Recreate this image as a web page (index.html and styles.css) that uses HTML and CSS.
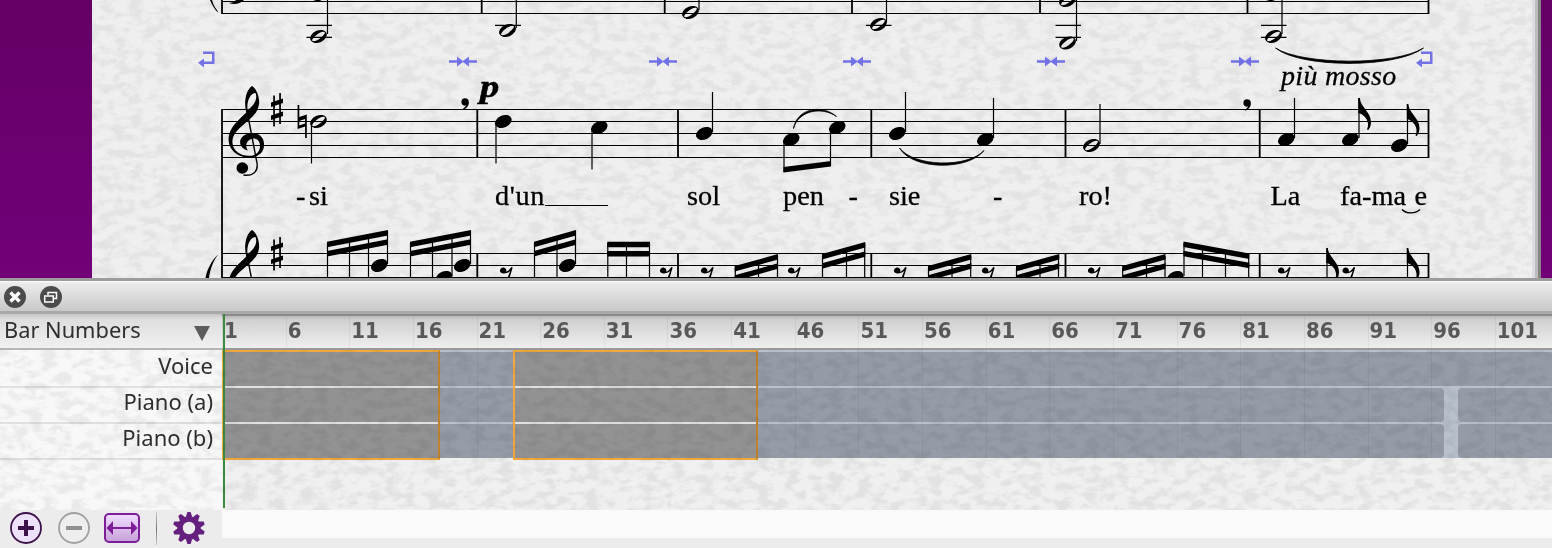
FILE: index.html
```
<!DOCTYPE html>
<html lang="en">
<head>
    <meta charset="UTF-8">
    <meta name="viewport" content="width=device-width, initial-scale=1.0">
    <title>Score</title>
    <link rel="stylesheet" href="styles.css">
</head>
<body>
    <div class="score">
        <svg class="music" width="1552" height="278" viewBox="0 0 1552 278">
            <defs>
                <filter id="grain" x="0" y="0" width="100%" height="100%" color-interpolation-filters="sRGB">
                    <feTurbulence type="fractalNoise" baseFrequency="0.07 0.12" numOctaves="4" seed="4"/>
                    <feColorMatrix values="0 0 0 0 0.89  0 0 0 0 0.89  0 0 0 0 0.89  4 0 0 0 -1.7"/>
                </filter>
                <g id="head"><ellipse rx="8.700" ry="6" transform="rotate(-24)"/></g>
                <g id="half"><path fill-rule="evenodd" transform="rotate(-24)" d="M-8.800 0A8.800 6 0 1 1 8.800 0A8.800 6 0 1 1-8.800 0M-7.500 1.400C-5.500 4.800 7.500 1.400 7.500-1.400C5.500-4.800-7.500-1.400-7.500 1.400"/></g>
                <g id="sharp"><path d="M273.200 95.500h1.700v31h-1.700zM279.200 93h1.700v31h-1.700zM271 102.500l12-4v4.500l-12 4zM271 115.500l12-4v4.500l-12 4z"/></g>
                <path id="rest" d="M-6 1.500A3.200 3.200 0 1 1 .2 2.200C2 2.200 4-.5 5.300-2.500L6.700-2 1.500 15H-1L4.200 1.500C1 4.500-6 5-6 1.500"/>
                <path id="flag" d="M-.7 0H.8C1.500 9 12 14 12 24C12 27 11 30 9.300 32L8 31.500C11.500 24 6 16.500-.7 15z"/>
                <path id="comma" d="M-3.600-1A3.600 3.600 0 0 1 3.800-1C4.200 3 1 6-2 6.700L-2.300 5.900C0 4.500 1 3 .8 2.300C-1.500 3.500-3.600 1.500-3.600-1"/>
                <path id="lock" d="M0-1.300H8V-5L14-.6 20-5V-1.300H28V1.300H20V5L14 .6 8 5V1.300H0z"/>
                <path id="return" d="M5 0H16.500V12.500H6V16L0 11.300 6 7V10H14V2.500H5z"/>
            </defs>
            <rect width="1552" height="278" filter="url(#grain)"/>

            <!-- system above -->
            <path class="line" d="M222 1.500H1428.500M222 13.500H1428.500"/>
            <path class="bar" d="M222 0V14M481.700 0V14M664.700 0V14M852 0V14M1040 0V14M1247.500 0V14M1428.500 0V14"/>
            <path class="line" d="M306.500 25.300H332M306.500 37.300H332M495 25.300H521M866 25.300H891.500M1055.500 25.300H1081M1055.500 37.300H1081M1261 25.300H1286.500M1261 37.300H1286.500"/>
            <path class="stem" d="M327.500 0V34M516.300 0V28M699 0V10M886.500 0V22M1076.500 0V41M1282 0V34"/>
            <use href="#half" x="318.500" y="36.500"/>
            <use href="#half" x="507.500" y="30.500"/>
            <use href="#half" x="690.500" y="12.500"/>
            <use href="#half" x="878.500" y="24.500"/>
            <use href="#half" x="1067.500" y="43"/>
            <use href="#half" x="1067.500" y=".5"/>
            <use href="#half" x="1273.500" y="36.500"/>
            <path d="M210 0C212 5 215 10 218.500 13L217 10C214 7 213 3 212 0zM229 3C234 5 240 4 244 0H236L234 2zM313 0H322L318 1.500zM1266 0H1275L1271 1.500z"/>
            <path class="slur" d="M1275.500 48C1300 68 1395 69 1423.500 48C1395 66 1302 65 1275.500 48z"/>

            <!-- layout marks -->
            <g class="marks">
                <use href="#return" x="198" y="51.500"/>
                <use href="#lock" x="449" y="61.500"/>
                <use href="#lock" x="649" y="61.500"/>
                <use href="#lock" x="843" y="61.500"/>
                <use href="#lock" x="1037" y="61.500"/>
                <use href="#lock" x="1231" y="61.500"/>
                <use href="#return" x="1416" y="51.500"/>
            </g>

            <!-- voice -->
            <path class="line" d="M222 109.500H1428.500M222 121.500H1428.500M222 133.500H1428.500M222 145.500H1428.500M222 157.500H1428.500"/>
            <path class="bar" d="M222 109V278M477.300 109V158M678 109V158M871.300 109V158M1065.500 109V158M1259.700 109V158M1428.500 109V158"/>
            <g id="treble">
                <path fill-rule="evenodd" d="M252 86C256 88 260 97 259 104C258 114 249 120 242 126C235 132 232 137 232.500 143C233 151 241 156.300 250 155.800C258 155 260 150 260 146C260 141 257 138.500 253.500 138.500C247.500 139 244 145 248 150.500C237 148 237 135 251 133C259 132 264.500 138 264 145C264 154 256 158 248 157.500C236 157 228.500 149 228.500 139C229 127 239 120 246.300 112.500C243.500 102 246 90 252 86zM247.500 110C254 106 258 99 255.500 93C250 93 246.500 102 247.500 110z"/>
                <path class="arc" d="M247 111L257 163C258.500 172 252 176.500 243.500 175"/>
                <circle cx="242.300" cy="168" r="5.800"/>
            </g>
            <use href="#sharp"/>
            <path d="M297.600 105h1.700v12l7.500-2.500v23.500h-1.700v-11.500l-7.500 2.500zM299.300 121v4.500l5.800-2v-4.500z" fill-rule="evenodd"/>
            <path class="stem" d="M311.500 123V163.500M496 123V163.500M592 129V169.500M712.500 132V92M784 141V172M830.500 129V166M905.500 132V92M993.500 138V98M1100 144V104M1294.500 138V98M1359 138V98M1407.500 144V104"/>
            <use href="#half" x="318.500" y="121.500"/>
            <use href="#head" x="503.300" y="121.500"/>
            <use href="#head" x="599.300" y="127.500"/>
            <use href="#head" x="704.300" y="133.500"/>
            <use href="#head" x="791.300" y="139.500"/>
            <use href="#head" x="837.300" y="127.500"/>
            <use href="#head" x="897.300" y="133.500"/>
            <use href="#head" x="985.300" y="139.500"/>
            <use href="#half" x="1091.500" y="145.500"/>
            <use href="#head" x="1286.300" y="139.500"/>
            <use href="#head" x="1350.300" y="139.500"/>
            <use href="#head" x="1399.300" y="145.500"/>
            <use href="#flag" x="1359" y="98"/>
            <use href="#flag" x="1407.500" y="104"/>
            <use href="#comma" x="465" y="103"/>
            <use href="#comma" x="1247" y="104"/>
            <path d="M783.500 167L831 161V166.500L783.500 172.500z"/>
            <path class="slur" d="M793.500 128.500C797 108 822 104 836.500 116.500C822 106 798 110.500 793.500 128.500zM899.500 148C912 170 968 171 984 150.500C968 168 914 167 899.500 148z"/>
            <text class="dynamic" transform="translate(480 97) scale(1.2 1)">p</text>
            <text class="tempo" x="1281" y="84.500">più mosso</text>

            <g class="lyrics">
                <text x="296" y="205">-</text>
                <text x="309" y="205">si</text>
                <text x="495" y="205" letter-spacing=".6">d'un</text>
                <text x="687" y="205">sol</text>
                <text x="783" y="205">pen</text>
                <text x="848.500" y="205">-</text>
                <text x="889" y="205">sie</text>
                <text x="993" y="205">-</text>
                <text x="1079" y="205">ro!</text>
                <text x="1270.500" y="205">La</text>
                <text x="1340" y="205">fa-ma</text>
                <text x="1414.500" y="205">e</text>
            </g>
            <path class="line" d="M545 205.500H608"/>
            <path class="arc" d="M1402 209.500C1406 214 1415 214 1420 209.500"/>

            <!-- piano right hand -->
            <path class="line" d="M222 253.500H1428.500M222 265.500H1428.500M222 277.500H1428.500"/>
            <path class="bar" d="M477.300 253V278M678 253V278M871.300 253V278M1065.500 253V278M1259.700 253V278M1428.500 253V278"/>
            <use href="#treble" y="144"/>
            <use href="#sharp" y="144"/>
            <path d="M218.500 254C211 261 207 270 205.500 278H209C210 270 213 261 218.500 254z"/>
            <path class="stem" d="M327.500 243V278M349.500 240V278M368.500 236V278M387.500 231V264M410.500 243V278M432.500 240V278M452 236V276M470.500 231V264M534.500 243V278M557 238V278M575.500 231V264M607.800 243V278M626.500 243V278M649.500 243V278M735.300 268V278M758.500 262V278M777.500 256V278M822.500 256V278M846.500 250V278M864.700 244V278M928.500 268V278M952 262V278M970.700 256V278M1016.500 268V278M1040 262V278M1058.500 256V278M1122.700 268V278M1146.500 262V278M1165 256V278M1184 243V276M1202.500 246V278M1225.500 250V278M1248.700 254V278M1327 248V278M1407.500 248V278"/>
            <path d="M327 241.700L388 230V235.500L327 247.200zM327 251L388 239.300V244.800L327 256.500zM410 241.700L471 230V235.500L410 247.200zM410 251L471 239.300V244.800L410 256.500zM534 241.700L576 230V235.500L534 247.200zM534 251L576 239.300V244.800L534 256.500zM607.300 241.700H650V247.200H607.300zM607.300 251H650V256.500H607.300z"/>
            <path id="beams" d="M734.700 266L778 254V259.500L734.700 271.500zM734.700 275.300L778 263.300V268.800L734.700 280.800z"/>
            <use href="#beams" x="87.300" y="-12"/>
            <use href="#beams" x="193.300"/>
            <use href="#beams" x="281.300"/>
            <use href="#beams" x="387.500"/>
            <path d="M1183.500 241.500L1249.300 253.500V259L1183.500 247zM1183.500 250.800L1249.300 262.800V268.300L1183.500 256.300z"/>
            <use href="#head" x="379.300" y="265.500"/>
            <use href="#head" x="462.300" y="265.500"/>
            <use href="#head" x="444" y="277.500"/>
            <use href="#head" x="567.300" y="265.500"/>
            <use href="#head" x="1175.300" y="277.500"/>
            <use href="#rest" x="506" y="269.500"/>
            <use href="#rest" x="666" y="269.500"/>
            <use href="#rest" x="707" y="269.500"/>
            <use href="#rest" x="794" y="269.500"/>
            <use href="#rest" x="900" y="269.500"/>
            <use href="#rest" x="988" y="269.500"/>
            <use href="#rest" x="1094" y="269.500"/>
            <use href="#rest" x="1284" y="269.500"/>
            <use href="#rest" x="1348.500" y="269.500"/>
            <use href="#flag" x="1327" y="248"/>
            <use href="#flag" x="1407.500" y="248"/>
        </svg>
        <div class="desk left"></div>
        <div class="desk right"></div>
    </div>

    <div class="titlebar">
        <svg width="22" height="22" viewBox="0 0 22 22">
            <circle cx="11" cy="11" r="11" fill="#4b4b4b"/>
            <path d="M6.500 6.500L15.500 15.500M15.500 6.500L6.500 15.500" stroke="#fff" stroke-width="3.500"/>
        </svg>
        <svg width="22" height="22" viewBox="0 0 22 22">
            <circle cx="11" cy="11" r="11" fill="#4b4b4b"/>
            <path d="M8 9V6.500H16.500V12.500H14M4.700 10H13.300V16H4.700z" fill="none" stroke="#fff" stroke-width="1.500"/>
        </svg>
    </div>

    <div class="timeline">
        <div class="names">
            <div class="names-head">Bar Numbers <i class="arrow"></i></div>
            <div class="name">Voice</div>
            <div class="name">Piano (a)</div>
            <div class="name">Piano (b)</div>
        </div>
        <div class="bars">
            <div class="ruler">
                <span>1</span><span>6</span><span>11</span><span>16</span><span>21</span><span>26</span><span>31</span><span>36</span><span>41</span><span>46</span><span>51</span><span>56</span><span>61</span><span>66</span><span>71</span><span>76</span><span>81</span><span>86</span><span>91</span><span>96</span><span>101</span>
            </div>
            <div class="track"><b class="full"></b></div>
            <div class="track"><b class="long"></b><b class="rest"></b></div>
            <div class="track"><b class="long"></b><b class="rest"></b></div>
            <div class="grid"><i></i><i></i><i></i><i></i><i></i><i></i><i></i><i></i><i></i><i></i><i></i><i></i><i></i><i></i><i></i><i></i><i></i><i></i><i></i><i></i><i></i></div>
            <div class="passage first"><i></i><i></i><i></i></div>
            <div class="passage second"><i></i><i></i><i></i></div>
            <div class="playhead"></div>
        </div>
        <svg class="paper" width="1552" height="160"><rect width="1552" height="160" filter="url(#grain)"/></svg>
    </div>

    <div class="footer">
        <div class="tools">
            <svg width="32" height="32" viewBox="0 0 32 32">
                <circle cx="16" cy="16" r="15" fill="#ede0fa" stroke="#3d1149" stroke-width="1.800"/>
                <path d="M8 16H24M16 8V24" stroke="#3d1149" stroke-width="4"/>
            </svg>
            <svg width="32" height="32" viewBox="0 0 32 32">
                <circle cx="16" cy="16" r="15" fill="#eee" stroke="#a0a0a0" stroke-width="1.800"/>
                <path d="M8 16H24" stroke="#919191" stroke-width="4"/>
            </svg>
            <div class="fit">
                <svg width="32" height="14" viewBox="0 0 32 14">
                    <path d="M.5 7L7 0V6H25V0L31.500 7 25 14V8H7V14z" fill="#7d1f99"/>
                </svg>
            </div>
            <div class="divider"></div>
            <svg class="gear" width="32" height="32" viewBox="-16 -16 32 32">
                <g fill="#65207f">
                    <path id="teeth" d="M-3.500-10L-1.600-16H1.600L3.500-10V10L1.600 16H-1.600L-3.500 10z"/>
                    <use href="#teeth" transform="rotate(36)"/>
                    <use href="#teeth" transform="rotate(72)"/>
                    <use href="#teeth" transform="rotate(108)"/>
                    <use href="#teeth" transform="rotate(144)"/>
                    <circle r="11.500"/>
                </g>
                <circle r="6.200" fill="#ececec"/>
            </svg>
        </div>
        <div class="scrollbar"></div>
    </div>
</body>
</html>
```
FILE: styles.css
```
body {
    margin: 0;
    width: 1552px;
    height: 548px;
    overflow: hidden;
    background: #ececec;
    color: #2e2e2e;
    font-family: "Noto Sans", sans-serif;
    font-size: 22px;
}
svg {
    display: block;
}

/* score */
.score {
    position: relative;
    height: 278px;
    background: #efefef;
    overflow: hidden;
}
.desk {
    position: absolute;
    top: 0;
    bottom: 0;
    background: linear-gradient(#640066, #720078);
}
.desk.left {
    left: 0;
    width: 92px;
}
.desk.right {
    right: 0;
    width: 11px;
    border-left: 3px solid #858585;
    box-shadow: -3px 0 #bcbcbc, -6px 0 #dcdce6;
}
.line {
    stroke: #000;
    stroke-width: 1.2;
}
.stem {
    stroke: #000;
    stroke-width: 1.2;
}
.bar {
    stroke: #000;
    stroke-width: 1.8;
}
.arc {
    fill: none;
    stroke: #000;
    stroke-width: 1.4;
}
.slur {
    stroke: #000;
    stroke-width: 0.8;
}
.marks {
    fill: #7272e6;
}
.lyrics, .tempo, .dynamic {
    font-family: "Liberation Serif", serif;
    font-size: 28.3px;
    stroke: #000;
    stroke-width: 0.3;
}
.tempo {
    font-size: 28px;
    font-style: italic;
    letter-spacing: 0.3px;
}
.dynamic {
    font-size: 32px;
    font-weight: bold;
    font-style: italic;
    stroke-width: 0.6;
}

/* panel */
.titlebar {
    display: flex;
    gap: 14px;
    height: 25px;
    padding: 5px 0 0 4px;
    border-top: 3px solid #9c9c9c;
    border-bottom: 3px solid #a9a9a9;
    background: linear-gradient(#fff, #ebebeb 2px, #c9c9c9);
}
.timeline {
    position: relative;
    display: flex;
    height: 196px;
    background: #f0f0f0;
}
.paper {
    position: absolute;
    top: 36px;
    left: 0;
    mix-blend-mode: multiply;
    opacity: 0.5;
}
.names {
    width: 222px;
    background: #f8f8f8;
}
.names-head {
    display: flex;
    justify-content: space-between;
    align-items: center;
    box-sizing: border-box;
    height: 36px;
    padding: 0 12px 4px 4px;
    border-bottom: 2px solid #b5b5b5;
    background: linear-gradient(#c4c4c4, #dedede 5px, #f0f0f0);
    font-size: 21.8px;
}
.arrow {
    border: 8px solid transparent;
    border-top: 15px solid #5c5c5c;
    border-bottom: 0;
    margin-top: 8px;
}
.name {
    height: 36px;
    padding-right: 9px;
    box-shadow: 0 2px #e0e0e0;
    line-height: 31px;
    text-align: right;
}
.bars {
    position: relative;
    width: 1330px;
    overflow: hidden;
}
.ruler {
    display: flex;
    box-sizing: border-box;
    height: 36px;
    border-top: 2px solid #8b8b8b;
    border-bottom: 2px solid #999;
    background: linear-gradient(#b8b8b8, #d0d0d0 4px, #efefef);
    color: #585858;
    font-family: "DejaVu Sans Condensed", "DejaVu Sans", sans-serif;
    font-stretch: condensed;
    font-weight: bold;
    line-height: 29px;
}
.ruler span {
    box-sizing: border-box;
    flex: 0 0 63.65px;
    padding-left: 1px;
    border-left: 1px solid rgba(0, 0, 0, 0.05);
}
.track {
    display: flex;
    gap: 14px;
    height: 34px;
    padding-top: 2px;
    background: #b8c1cd;
}
.track b {
    flex: none;
    border-radius: 4px;
    background: #959ca7;
}
.track .full {
    width: 1340px;
    border-radius: 0;
}
.long {
    width: 1222px;
}
.rest {
    width: 110px;
}
.grid {
    position: absolute;
    top: 36px;
    left: 0;
    display: flex;
    height: 108px;
}
.grid i {
    box-sizing: border-box;
    flex: 0 0 63.65px;
    border-left: 1px solid rgba(0, 0, 0, 0.05);
}
.passage {
    position: absolute;
    top: 36px;
    box-sizing: border-box;
    height: 110px;
    border: 2px solid #f2a93c;
    border-right-color: #c08430;
}
.passage.first {
    left: 0;
    width: 218px;
}
.passage.second {
    left: 291px;
    width: 245px;
}
.passage i {
    display: block;
    height: 34px;
    margin-bottom: 2px;
    background: rgba(146, 146, 146, 0.94);
    box-shadow: 0 2px #e2e2e2;
}
.passage i:last-child {
    box-shadow: none;
}
.playhead {
    position: absolute;
    top: 0;
    left: 1px;
    width: 2px;
    height: 194px;
    background: #3d8a3d;
}

/* toolbar */
.footer {
    display: flex;
    height: 38px;
}
.tools {
    display: flex;
    align-items: center;
    box-sizing: border-box;
    width: 222px;
    height: 36px;
    padding-left: 10px;
    gap: 16px;
}
.fit {
    display: flex;
    align-items: center;
    justify-content: center;
    box-sizing: border-box;
    width: 36px;
    height: 30px;
    margin-left: -2px;
    border: 2px solid #7d1f99;
    border-radius: 5px;
    background: linear-gradient(#f0dcff, #c9a2da);
}
.fit svg {
    flex: none;
}
.divider {
    width: 1px;
    height: 33px;
    background: linear-gradient(#c8c8c8, #777, #c8c8c8);
}
.scrollbar {
    width: 1330px;
    height: 28px;
    background: #fafafa;
}
```
